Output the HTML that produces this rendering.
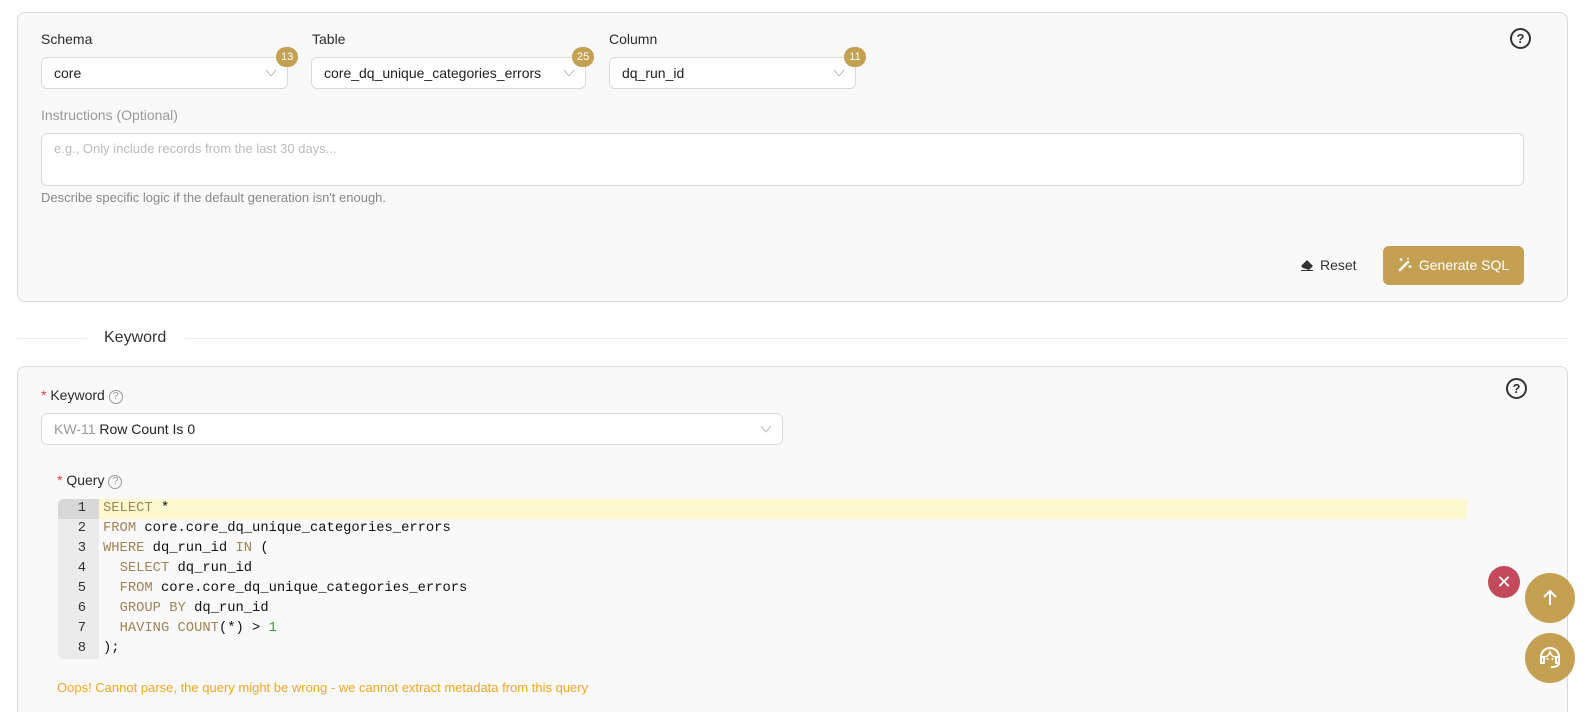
<!DOCTYPE html>
<html><head><meta charset="utf-8"><style>
*{box-sizing:border-box;margin:0;padding:0}
html,body{width:1588px;height:712px;overflow:hidden}
body{background:#fff;font-family:"Liberation Sans",sans-serif;color:#222;font-size:14px;position:relative}
.card{position:absolute;left:17px;width:1551px;background:#f9f9f9;border:1px solid #d9d9d9;border-radius:8px}
.abs{position:absolute}
.lbl{font-size:14px;color:#2a2a2a}
.sel{position:absolute;height:32px;background:#fff;border:1px solid #d9d9d9;border-radius:6px;font-size:14px;padding:0 12px;line-height:30px;color:#222}
.chev{position:absolute;right:10px;top:11px;width:12px;height:8px}
.badge{position:absolute;height:20px;border-radius:10px;background:#c4a053;color:#fff;font-size:11px;line-height:20px;text-align:center;padding:0 5px;min-width:22px}
.help{position:absolute;width:21px;height:21px;border:2px solid #333;border-radius:50%;font-size:13px;font-weight:bold;text-align:center;line-height:17px;color:#333}
.smallq{display:inline-block;width:14px;height:14px;border:1px solid #999;border-radius:50%;font-size:10px;line-height:12px;text-align:center;color:#999;vertical-align:1px;margin-left:4px}
.code{position:absolute;left:58px;top:499px;font-family:"Liberation Mono",monospace;font-size:13.8px}
.ln{position:absolute;left:0;width:40px;height:20px;line-height:20px;text-align:right;padding-right:12px;color:#333}
.cl{position:absolute;left:45px;height:20px;line-height:20px;white-space:pre;color:#111}
.k{color:#a08457}.n{color:#3a9a3a}
</style></head><body>
<div class="card" style="top:12px;height:290px"></div>
<div class="abs lbl" style="left:41px;top:31px">Schema</div>
<div class="abs lbl" style="left:312px;top:31px">Table</div>
<div class="abs lbl" style="left:609px;top:31px">Column</div>
<div class="sel" style="left:41px;top:57px;width:247px">core<svg class="chev" viewBox="0 0 12 8"><path d="M1 1l5 6 5-6" fill="none" stroke="#bbb" stroke-width="1"/></svg></div>
<div class="sel" style="left:311px;top:57px;width:275px">core_dq_unique_categories_errors<svg class="chev" viewBox="0 0 12 8"><path d="M1 1l5 6 5-6" fill="none" stroke="#bbb" stroke-width="1"/></svg></div>
<div class="sel" style="left:609px;top:57px;width:247px">dq_run_id<svg class="chev" viewBox="0 0 12 8"><path d="M1 1l5 6 5-6" fill="none" stroke="#bbb" stroke-width="1"/></svg></div>
<div class="badge" style="left:276px;top:47px">13</div>
<div class="badge" style="left:572px;top:47px">25</div>
<div class="badge" style="left:844px;top:47px">11</div>
<div class="help" style="left:1510px;top:28px">?</div>
<div class="abs" style="left:41px;top:107px;color:#999;font-size:14px">Instructions (Optional)</div>
<div class="abs" style="left:41px;top:133px;width:1483px;height:53px;background:#fff;border:1px solid #d9d9d9;border-radius:6px;padding:7px 12px;color:#bbb;font-size:13px">e.g., Only include records from the last 30 days...</div>
<div class="abs" style="left:41px;top:190px;color:#888;font-size:13px">Describe specific logic if the default generation isn't enough.</div>
<div class="abs" style="left:1300px;top:257px;font-size:14px;color:#333"><svg width="14" height="12" viewBox="0 0 14 12" style="vertical-align:-1px;margin-right:6px"><path d="M1 7l6-6 6 6-4 4H5z" fill="#333"/><path d="M3 9l2 2h4" fill="#fff"/><path d="M1 11.5h12" stroke="#333"/></svg>Reset</div>
<div class="abs" style="left:1383px;top:246px;width:141px;height:39px;background:#c4a053;border-radius:6px;color:#fff;font-size:14px;line-height:39px;text-align:center"><svg width="15" height="15" viewBox="0 0 15 15" style="vertical-align:-2px;margin-right:6px"><path d="M2 13l8-8" stroke="#fff" stroke-width="2.5" stroke-linecap="round"/><path d="M3 1v3M1.5 2.5h3M12 8v3M10.5 9.5h3M9 1.5h2" stroke="#fff" stroke-width="1.2"/></svg>Generate SQL</div>
<div class="abs" style="left:17px;top:338px;width:70px;height:1px;background:#eee"></div>
<div class="abs" style="left:185px;top:338px;width:1383px;height:1px;background:#eee"></div>
<div class="abs" style="left:104px;top:329px;font-size:16px;color:#333">Keyword</div>
<div class="card" style="top:366px;height:360px"></div>
<div class="abs lbl" style="left:41px;top:387px"><span style="color:#e04040">*</span> Keyword<span class="smallq">?</span></div>
<div class="help" style="left:1506px;top:378px">?</div>
<div class="sel" style="left:41px;top:413px;width:742px"><span style="color:#999">KW-11</span> Row Count Is 0<svg class="chev" viewBox="0 0 12 8"><path d="M1 1l5 6 5-6" fill="none" stroke="#bbb" stroke-width="1"/></svg></div>
<div class="abs lbl" style="left:57px;top:472px"><span style="color:#e04040">*</span> Query<span class="smallq">?</span></div>
<div class="abs" style="left:58px;top:499px;width:41px;height:160px;background:#ebebeb;border-radius:6px 0 0 6px"></div>
<div class="abs" style="left:58px;top:499px;width:41px;height:20px;background:#d8d8d8;border-radius:6px 0 0 0"></div>
<div class="abs" style="left:99px;top:499px;width:1368px;height:20px;background:#fdf8cf"></div>
<div class="code">
<div class="ln" style="top:0">1</div><div class="cl" style="top:0"><span class="k">SELECT</span> *</div>
<div class="ln" style="top:20px">2</div><div class="cl" style="top:20px"><span class="k">FROM</span> core.core_dq_unique_categories_errors</div>
<div class="ln" style="top:40px">3</div><div class="cl" style="top:40px"><span class="k">WHERE</span> dq_run_id <span class="k">IN</span> (</div>
<div class="ln" style="top:60px">4</div><div class="cl" style="top:60px">  <span class="k">SELECT</span> dq_run_id</div>
<div class="ln" style="top:80px">5</div><div class="cl" style="top:80px">  <span class="k">FROM</span> core.core_dq_unique_categories_errors</div>
<div class="ln" style="top:100px">6</div><div class="cl" style="top:100px">  <span class="k">GROUP BY</span> dq_run_id</div>
<div class="ln" style="top:120px">7</div><div class="cl" style="top:120px">  <span class="k">HAVING</span> <span class="k">COUNT</span>(*) &gt; <span class="n">1</span></div>
<div class="ln" style="top:140px">8</div><div class="cl" style="top:140px">);</div>
</div>
<div class="abs" style="left:57px;top:680px;color:#f5a623;font-size:13px">Oops! Cannot parse, the query might be wrong - we cannot extract metadata from this query</div>
<div class="abs" style="left:1488px;top:566px;width:32px;height:32px;border-radius:50%;background:#c24a5a;color:#fff;text-align:center;line-height:32px;font-size:18px">✕</div>
<div class="abs" style="left:1525px;top:573px;width:50px;height:50px;border-radius:50%;background:#c4a053"><svg width="50" height="50" viewBox="0 0 50 50"><path d="M25 32V18M19 24l6-6 6 6" fill="none" stroke="#fff" stroke-width="2"/></svg></div>
<div class="abs" style="left:1525px;top:633px;width:50px;height:50px;border-radius:50%;background:#c4a053"><svg width="50" height="50" viewBox="0 0 50 50"><path d="M16 28v-4a9 9 0 0 1 18 0v4M16 24h3v6h-3zM31 24h3v6h-3zM34 30c0 3-3 4-8 4" fill="none" stroke="#fff" stroke-width="2"/><path d="M19 24c3 0 5-2 6-5 1 3 3 5 6 5" fill="none" stroke="#fff" stroke-width="1.5"/><circle cx="22.5" cy="26" r="1" fill="#fff"/><circle cx="27.5" cy="26" r="1" fill="#fff"/></svg></div>
</body></html>
